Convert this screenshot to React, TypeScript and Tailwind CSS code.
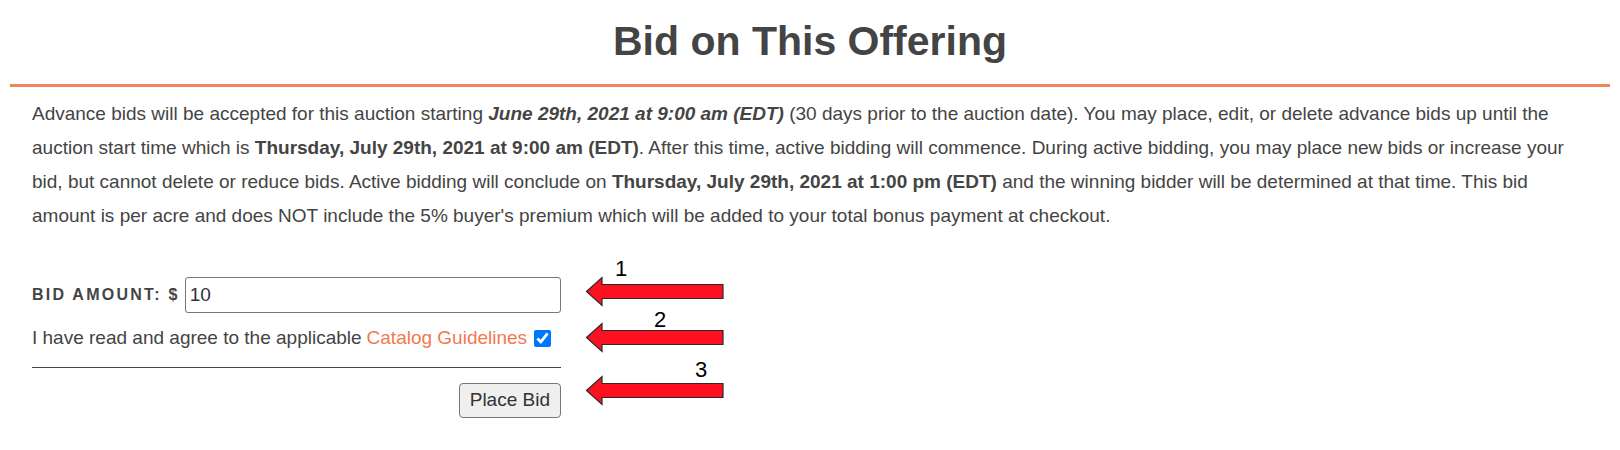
import React from 'react';

const font = { fontFamily: '"Liberation Sans", Arial, Helvetica, sans-serif' };

const Arrow: React.FC<{ top: number }> = ({ top }) => (
  <svg
    className="absolute left-[585px]"
    style={{ top }}
    width="140"
    height="32"
    viewBox="0 0 140 32"
  >
    <path
      d="M1.5 15.5 L17 1.5 L17 8.5 L138 8.5 L138 22.5 L17 22.5 L17 29.5 Z"
      fill="#ff1020"
      stroke="#2a2a2a"
      strokeWidth="1.2"
      strokeLinejoin="miter"
    />
  </svg>
);

export default function App() {
  return (
    <div className="relative w-[1620px] h-[450px] bg-white text-[#444]" style={font}>
      <div className="mx-[10px]">
        <h2 className="h-[84px] pt-[21px] text-center text-[41px] leading-[40px] font-bold text-[#444]">
          Bid on This Offering
        </h2>
        <div className="h-[3px] bg-[#f08459]" />
      </div>

      <div className="pl-[32px] pr-[30px] pt-[10px]">
        <p className="text-[19px] leading-[34px] text-[#444]">
          Advance bids will be accepted for this auction starting{' '}
          <b className="italic">June 29th, 2021 at 9:00 am (EDT)</b> (30 days prior to the auction date). You may
          place, edit, or delete advance bids up until the auction start time which is{' '}
          <b>Thursday, July 29th, 2021 at 9:00 am (EDT)</b>. After this time, active bidding will commence. During
          active bidding, you may place new bids or increase your bid, but cannot delete or reduce bids. Active bidding
          will conclude on <b>Thursday, July 29th, 2021 at 1:00 pm (EDT)</b> and the winning bidder will be determined
          at that time. This bid amount is per acre and does NOT include the 5% buyer's premium which will be added to
          your total bonus payment at checkout.
        </p>

        <form className="mt-[44px] w-[529px] flex flex-col" onSubmit={(e) => e.preventDefault()}>
          <div className="flex items-center">
            <label className="text-[16px] font-bold tracking-[0.14em] text-[#444] mr-[5px] whitespace-nowrap">
              BID AMOUNT: $
            </label>
            <input
              type="text"
              defaultValue="10"
              className="flex-1 h-[36px] border border-[#767676] rounded-[3px] px-[4px] text-[19px] text-[#333] outline-none"
            />
          </div>

          <div className="flex items-center mt-[14px] text-[19px] leading-[22px] text-[#444]">
            <span className="whitespace-nowrap">I have read and agree to the applicable</span>
            <a href="#" className="ml-[5px] text-[#f07a4f] whitespace-nowrap">
              Catalog Guidelines
            </a>
            <input type="checkbox" defaultChecked className="ml-[7px] w-[17px] h-[17px] shrink-0" />
          </div>

          <hr className="mt-[18px] border-0 h-[1px] bg-[#444]" />

          <div className="flex justify-end mt-[15px]">
            <button
              type="submit"
              className="h-[35px] px-[10px] bg-[#efefef] border border-[#767676] rounded-[4px] text-[19px] text-[#333]"
            >
              Place Bid
            </button>
          </div>
        </form>
      </div>

      <Arrow top={276} />
      <Arrow top={322} />
      <Arrow top={375} />
      <span className="absolute left-[615px] top-[258px] text-[22px] leading-[22px] text-black">1</span>
      <span className="absolute left-[654px] top-[309px] text-[22px] leading-[22px] text-black">2</span>
      <span className="absolute left-[695px] top-[359px] text-[22px] leading-[22px] text-black">3</span>
    </div>
  );
}
